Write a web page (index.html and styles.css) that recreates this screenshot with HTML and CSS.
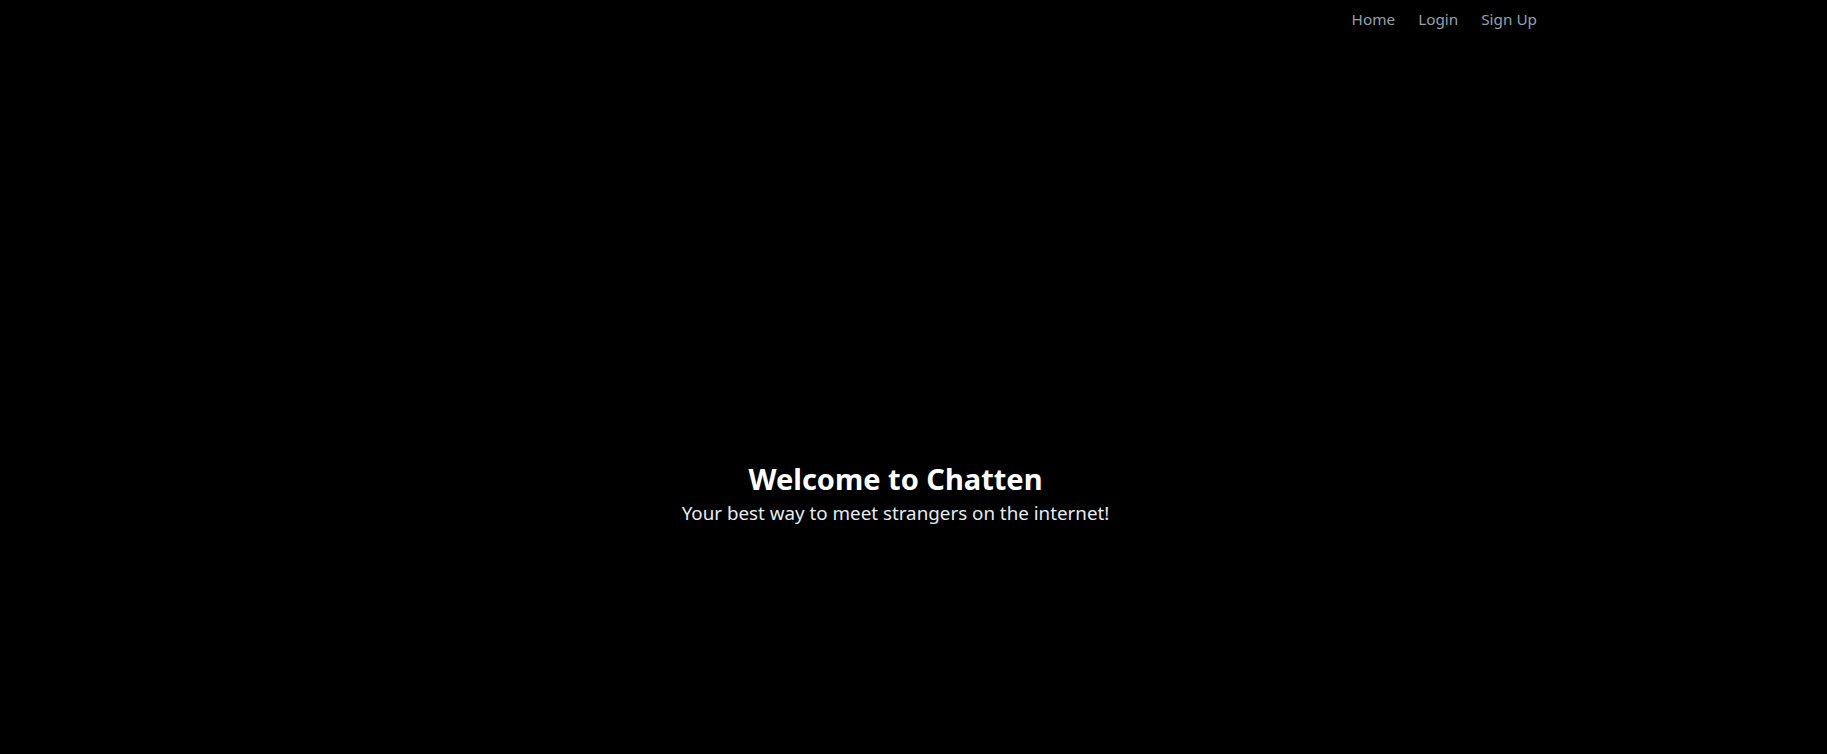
FILE: index.html
```html
<!DOCTYPE html>
<html lang="en">
<head>
<meta charset="utf-8">
<title>Chatten</title>
<link rel="stylesheet" href="styles.css">
</head>
<body>
<nav class="navbar">
  <ul class="nav-links">
    <li><a href="#" class="nav-link">Home</a></li>
    <li><a href="#" class="nav-link">Login</a></li>
    <li><a href="#" class="nav-link">Sign Up</a></li>
  </ul>
</nav>
<main class="hero">
  <h1 class="hero-title">Welcome to Chatten</h1>
  <p class="hero-sub">Your best way to meet strangers on the internet!</p>
</main>
</body>
</html>
```
FILE: styles.css
```css
html, body {
  margin: 0;
  padding: 0;
  background: #000;
  height: 100%;
}
body {
  font-family: "Noto Sans", "Open Sans", sans-serif;
  color: #fff;
}
.navbar {
  display: flex;
  justify-content: flex-end;
  padding: 7px 290px 0 0;
}
.nav-links {
  display: flex;
  gap: 23px;
  list-style: none;
  margin: 0;
  padding: 0;
}
.nav-link {
  color: #95a0ab;
  text-decoration: none;
  font-size: 15.3px;
  line-height: 24px;
}
.hero {
  display: flex;
  flex-direction: column;
  align-items: center;
  padding: 428px 36px 0 0;
}
.hero-title {
  margin: 0;
  font-size: 29px;
  font-weight: 700;
  line-height: 40px;
  color: #fff;
}
.hero-sub {
  margin: 1px 0 0;
  font-size: 18.8px;
  line-height: 26px;
  color: #e6ecf2;
}
```
